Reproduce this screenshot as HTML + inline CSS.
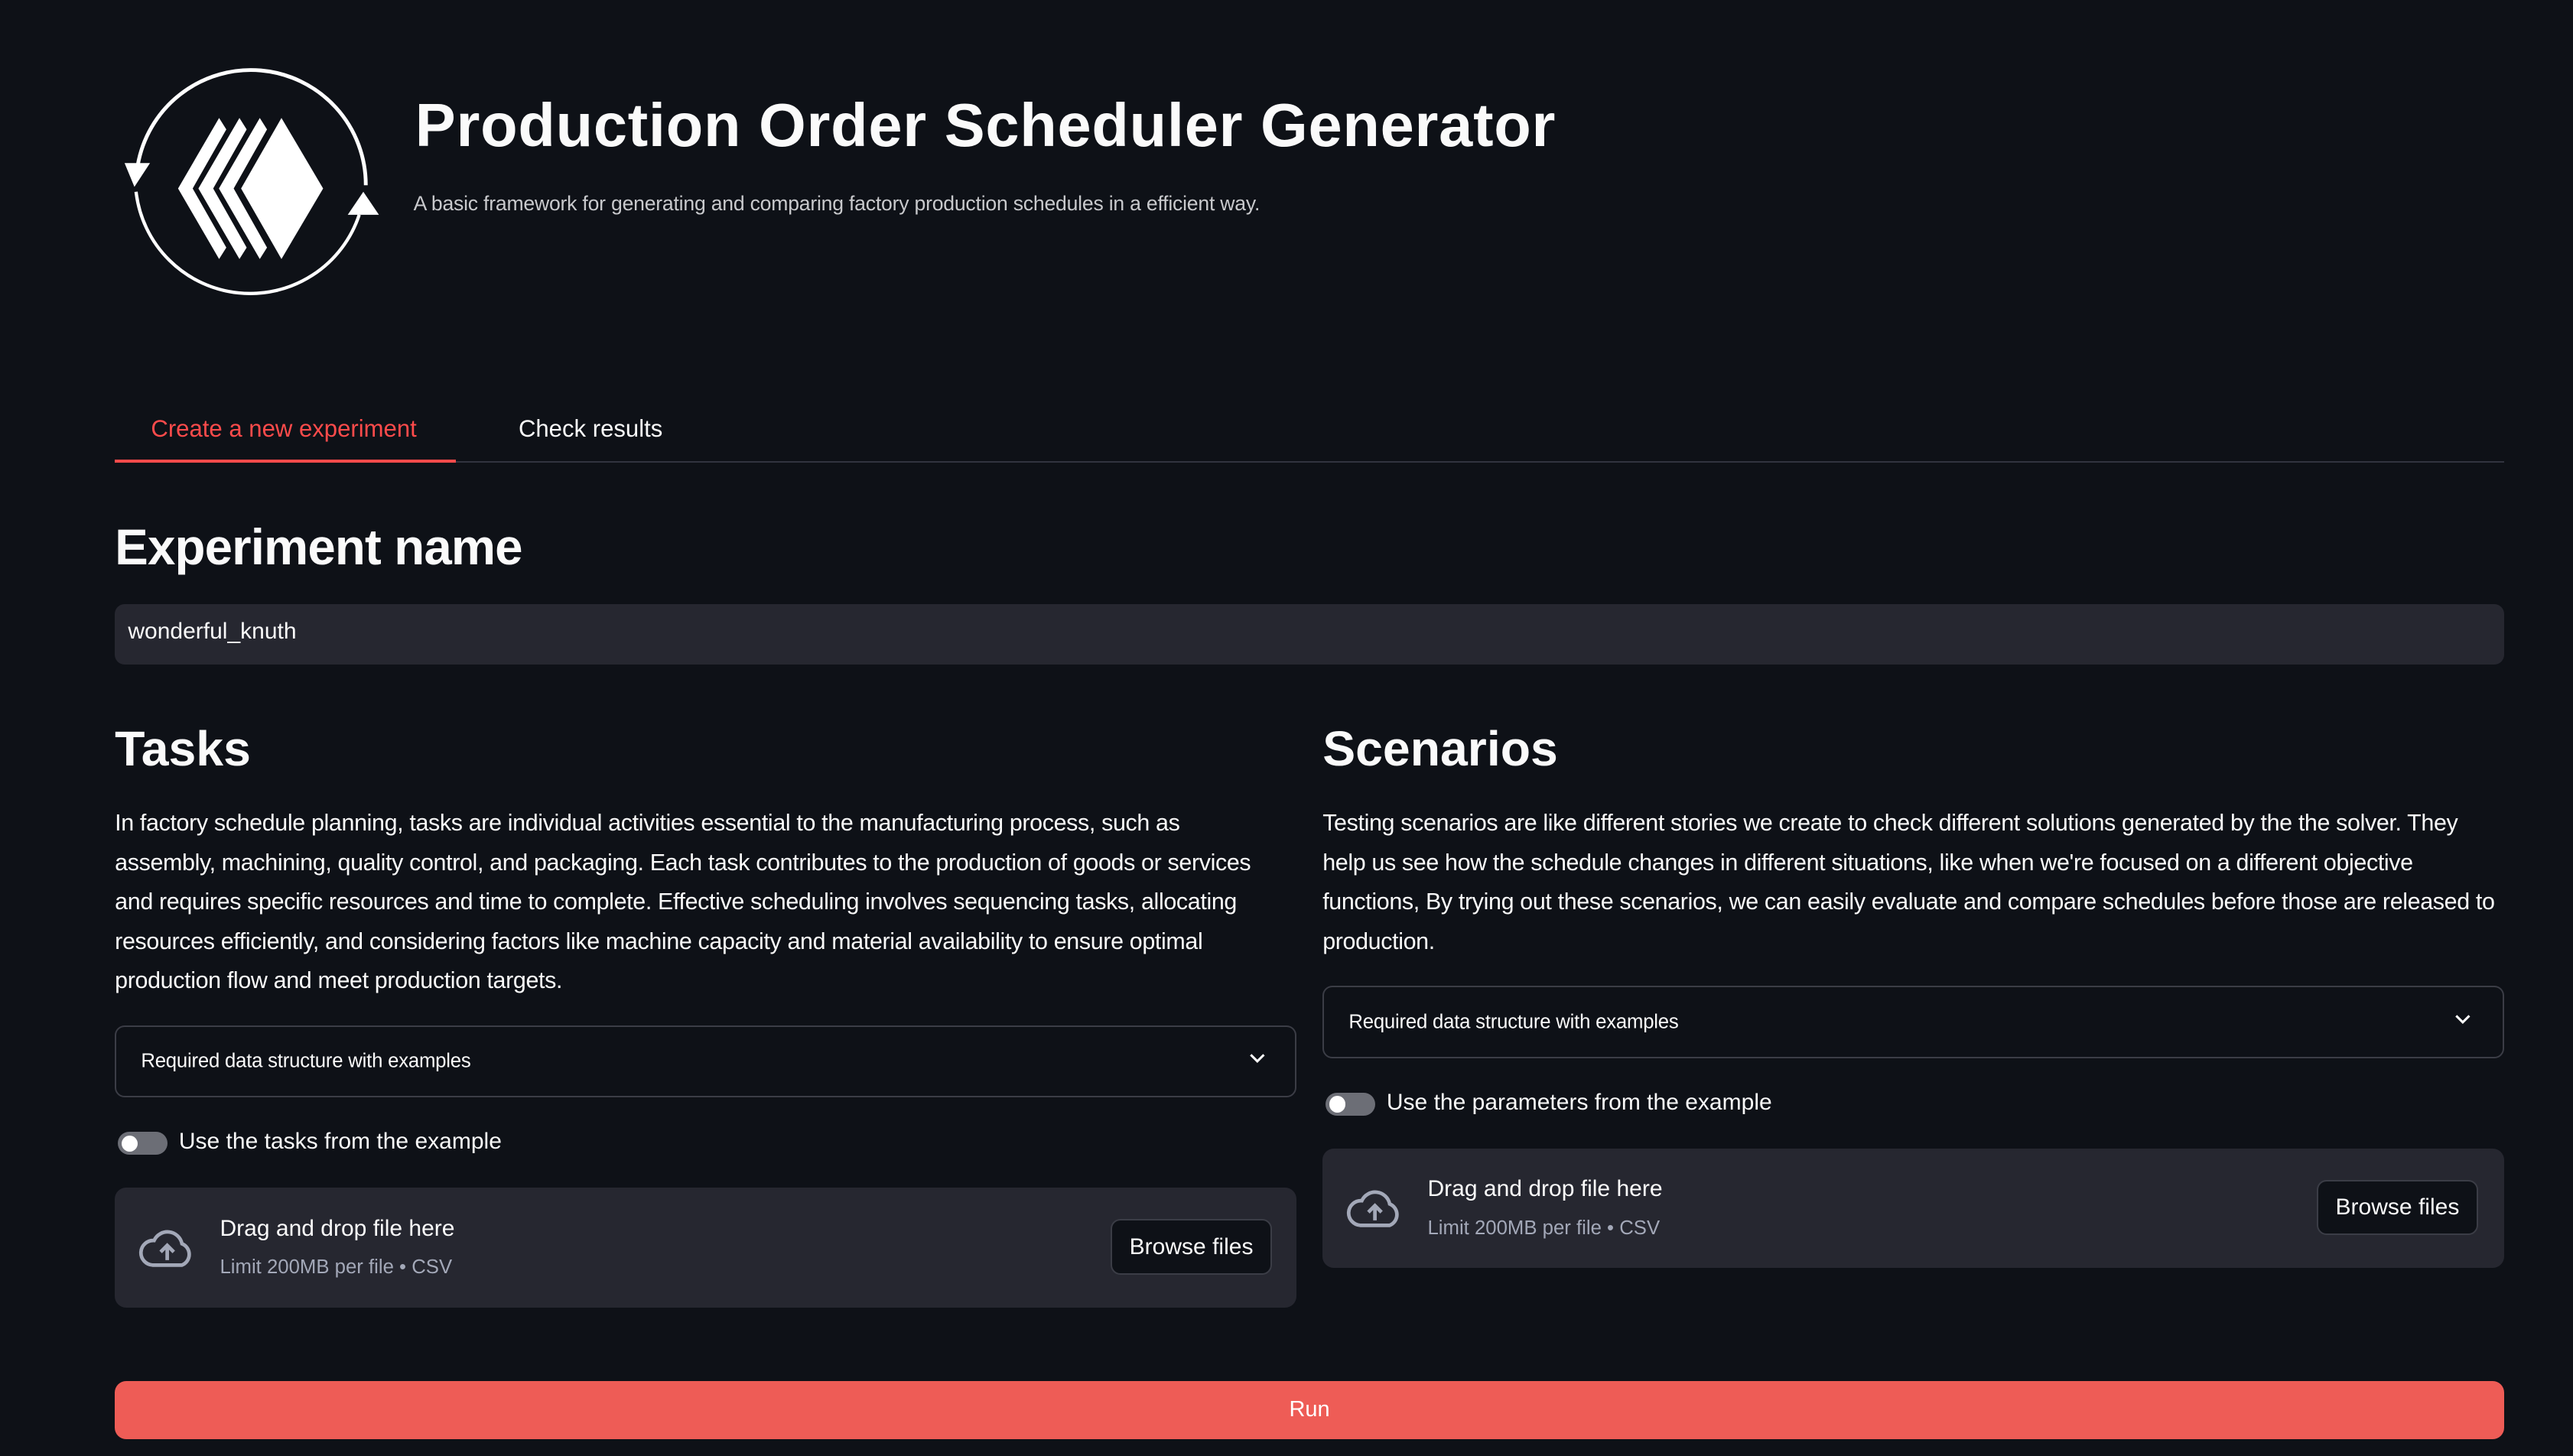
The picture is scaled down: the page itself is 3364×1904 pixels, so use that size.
<!DOCTYPE html>
<html><head><meta charset="utf-8"><style>
html,body{margin:0;padding:0;background:#0e1117;}
body{width:1568px;height:887px;zoom:2.14541;position:relative;overflow:hidden;font-family:"Liberation Sans",sans-serif;color:#fafafa;}
.a{position:absolute;white-space:nowrap;}
.p{font-size:14.2px;line-height:24px;letter-spacing:-0.17px;}
.exp{position:absolute;border:1px solid #3b3d46;border-radius:6px;box-sizing:border-box;}
.exp span{position:absolute;left:15px;top:50%;transform:translateY(-50%);font-size:12px;letter-spacing:-0.1px;}
.tog{position:absolute;width:30px;height:14px;border-radius:7px;background:#6c6e76;}
.tog:after{content:"";position:absolute;left:2px;top:2px;width:10px;height:10px;border-radius:50%;background:#fff;}
.up{position:absolute;background:#262730;border-radius:7px;}
.btn{position:absolute;background:#0e1117;border:1px solid #3b3d46;border-radius:6px;box-sizing:border-box;font-size:14px;display:flex;align-items:center;justify-content:center;}
</style></head><body>
<svg class="a" style="left:70px;top:36px" width="170" height="160" viewBox="70 36 170 160">
<path d="M84 101 A70 70 0 0 1 223 113" fill="none" stroke="#fff" stroke-width="2.3"/>
<path d="M83 117 A70 70 0 0 0 219 131" fill="none" stroke="#fff" stroke-width="2"/>
<polygon points="76,99.5 91.5,99.5 82,114" fill="#fff"/>
<polygon points="221.5,117 212,131 231,131" fill="#fff"/>
<polygon points="171.6,72 197,115 171.6,158 147,115" fill="#fff"/>
<polygon points="133.6,72 138,79 117.5,115 138,151 133.6,158 108.6,115" fill="#fff"/>
<polygon points="146,72 150.4,79 130,115 150.4,151 146,158 121,115" fill="#fff"/>
<polygon points="158.4,72 162.8,79 142.5,115 162.8,151 158.4,158 133.5,115" fill="#fff"/>
</svg>
<div class="a" style="left:253px;top:55px;font-size:37px;font-weight:bold;letter-spacing:0.35px;">Production Order Scheduler Generator</div>
<div class="a" style="left:252px;top:117px;font-size:12.4px;color:#c8c9cc;letter-spacing:-0.1px;">A basic framework for generating and comparing factory production schedules in a efficient way.</div>
<div class="a" style="left:92px;top:253px;font-size:14.5px;color:#ff4b4b;">Create a new experiment</div>
<div class="a" style="left:316px;top:253px;font-size:14.5px;">Check results</div>
<div class="a" style="left:70px;top:281px;width:1456px;height:1px;background:#31333f;"></div>
<div class="a" style="left:70px;top:280px;width:208px;height:2px;background:#ff4b4b;"></div>
<div class="a" style="left:70px;top:316px;font-size:30.5px;font-weight:bold;letter-spacing:-0.4px;">Experiment name</div>
<div class="a" style="left:70px;top:368px;width:1456px;height:37px;background:#262730;border-radius:6px;"></div>
<div class="a" style="left:78px;top:377px;font-size:14px;">wonderful_knuth</div>
<div class="a" style="left:70px;top:439px;font-size:30px;font-weight:bold;">Tasks</div>
<div class="a" style="left:806px;top:439px;font-size:30px;font-weight:bold;">Scenarios</div>
<div class="a p" style="left:70px;top:490px;">In factory schedule planning, tasks are individual activities essential to the manufacturing process, such as<br>assembly, machining, quality control, and packaging. Each task contributes to the production of goods or services<br>and requires specific resources and time to complete. Effective scheduling involves sequencing tasks, allocating<br>resources efficiently, and considering factors like machine capacity and material availability to ensure optimal<br>production flow and meet production targets.</div>
<div class="a p" style="left:806px;top:490px;">Testing scenarios are like different stories we create to check different solutions generated by the the solver. They<br>help us see how the schedule changes in different situations, like when we're focused on a different objective<br>functions, By trying out these scenarios, we can easily evaluate and compare schedules before those are released to<br>production.</div>
<div class="exp" style="left:70px;top:625px;width:720px;height:44px;"><span>Required data structure with examples</span></div>
<div class="exp" style="left:806px;top:601px;width:720px;height:44px;"><span>Required data structure with examples</span></div>
<svg class="a" style="left:760px;top:641px" width="12" height="10"><path d="M2 2 L6 6 L10 2" fill="none" stroke="#fff" stroke-width="1.4"/></svg>
<svg class="a" style="left:1495px;top:617px" width="12" height="10"><path d="M2 2 L6 6 L10 2" fill="none" stroke="#fff" stroke-width="1.4"/></svg>
<div class="tog" style="left:72px;top:690px;"></div>
<div class="a" style="left:109px;top:688px;font-size:14px;">Use the tasks from the example</div>
<div class="tog" style="left:808px;top:666px;"></div>
<div class="a" style="left:845px;top:664px;font-size:14px;">Use the parameters from the example</div>
<div class="up" style="left:70px;top:724px;width:720px;height:73px;"></div>
<div class="up" style="left:806px;top:700px;width:720px;height:73px;"></div>
<svg class="a" style="left:84px;top:748px" width="36" height="26" viewBox="0 0 36 26"><path d="M9 23 H27 A7 7 0 0 0 27 10 A9 9 0 0 0 10 8 A7.5 7.5 0 0 0 9 23 Z" fill="none" stroke="#a3a8b8" stroke-width="2.2"/><path d="M18 20 V12 M14 15 L18 11 L22 15" fill="none" stroke="#a3a8b8" stroke-width="2.2"/></svg>
<svg class="a" style="left:820px;top:724px" width="36" height="26" viewBox="0 0 36 26"><path d="M9 23 H27 A7 7 0 0 0 27 10 A9 9 0 0 0 10 8 A7.5 7.5 0 0 0 9 23 Z" fill="none" stroke="#a3a8b8" stroke-width="2.2"/><path d="M18 20 V12 M14 15 L18 11 L22 15" fill="none" stroke="#a3a8b8" stroke-width="2.2"/></svg>
<div class="a" style="left:134px;top:741px;font-size:14px;">Drag and drop file here</div>
<div class="a" style="left:134px;top:766px;font-size:12px;color:#a3a8b8;">Limit 200MB per file • CSV</div>
<div class="a" style="left:870px;top:717px;font-size:14px;">Drag and drop file here</div>
<div class="a" style="left:870px;top:742px;font-size:12px;color:#a3a8b8;">Limit 200MB per file • CSV</div>
<div class="btn" style="left:677px;top:743px;width:98px;height:34px;">Browse files</div>
<div class="btn" style="left:1412px;top:719px;width:98px;height:34px;">Browse files</div>
<div class="a" style="left:70px;top:842px;width:1456px;height:35px;background:#ee5c56;border-radius:7px;display:flex;align-items:center;justify-content:center;font-size:13.5px;color:#fff;">Run</div>
</body></html>
